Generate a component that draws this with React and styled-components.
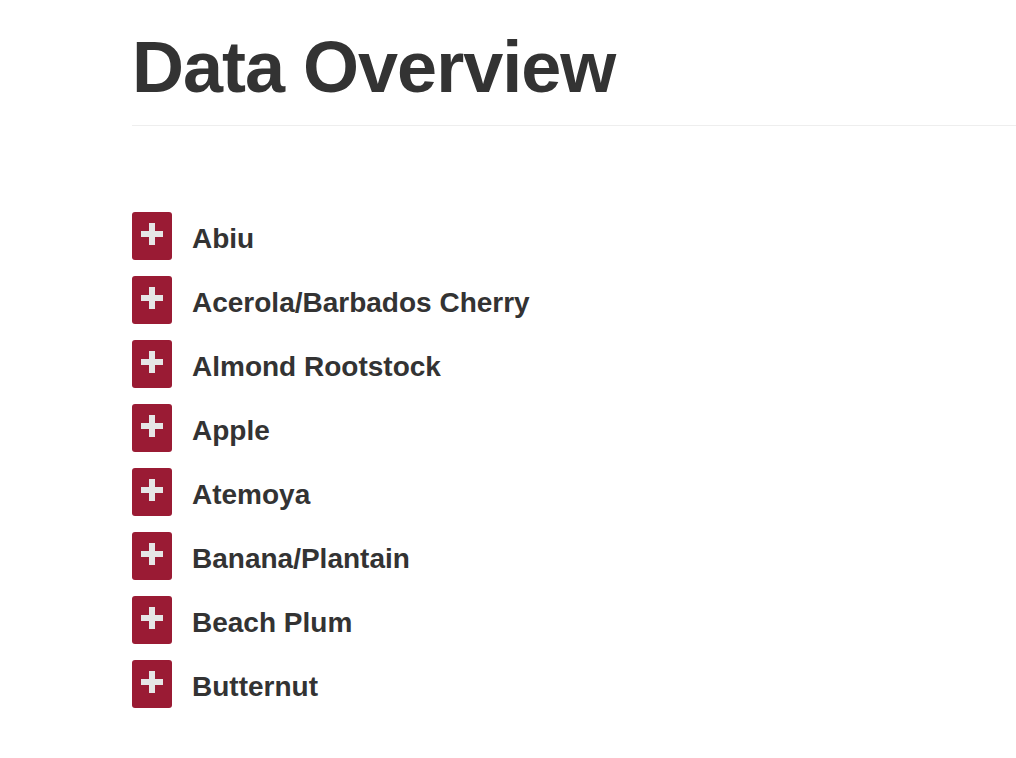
import React from "react";
import styled, { createGlobalStyle } from "styled-components";

const GlobalStyle = createGlobalStyle`
  html, body {
    margin: 0;
    padding: 0;
    background: #ffffff;
  }
  body {
    font-family: "Liberation Sans", Arial, Helvetica, sans-serif;
    color: #333333;
  }
`;

const Page = styled.div`
  padding: 28px 0 0 132px;
  overflow: hidden;
`;

const Header = styled.header`
  border-bottom: 1px solid #eeeeee;
  padding-bottom: 18px;
  margin-right: -20px;
`;

const Title = styled.h1`
  margin: 0;
  font-size: 72px;
  font-weight: 700;
  line-height: 1.1;
  letter-spacing: -1px;
  color: #333333;
`;

const List = styled.ul`
  list-style: none;
  margin: 86px 0 0;
  padding: 0;
  display: flex;
  flex-direction: column;
  gap: 16px;
`;

const Row = styled.li`
  display: flex;
  align-items: center;
  gap: 20px;
  height: 48px;
`;

const ToggleButton = styled.button`
  width: 40px;
  height: 48px;
  padding: 0;
  border: none;
  border-radius: 3px;
  background: #9a1b34;
  cursor: pointer;
  flex-shrink: 0;
  display: block;

  svg {
    display: block;
  }
`;

const Label = styled.span`
  font-size: 28px;
  font-weight: 700;
  line-height: 42px;
  padding-top: 6px;
  color: #333333;
`;

const PlusIcon = () => (
  <svg width="40" height="48" viewBox="0 0 40 48">
    <rect x="9" y="19" width="22" height="6" fill="#e6e6e6" />
    <rect x="17" y="11" width="6" height="22" fill="#e6e6e6" />
  </svg>
);

const fruits = [
  "Abiu",
  "Acerola/Barbados Cherry",
  "Almond Rootstock",
  "Apple",
  "Atemoya",
  "Banana/Plantain",
  "Beach Plum",
  "Butternut",
];

export default function App() {
  return (
    <>
      <GlobalStyle />
      <Page>
        <Header>
          <Title>Data Overview</Title>
        </Header>
        <List>
          {fruits.map((name) => (
            <Row key={name}>
              <ToggleButton aria-label={`Expand ${name}`}>
                <PlusIcon />
              </ToggleButton>
              <Label>{name}</Label>
            </Row>
          ))}
        </List>
      </Page>
    </>
  );
}
